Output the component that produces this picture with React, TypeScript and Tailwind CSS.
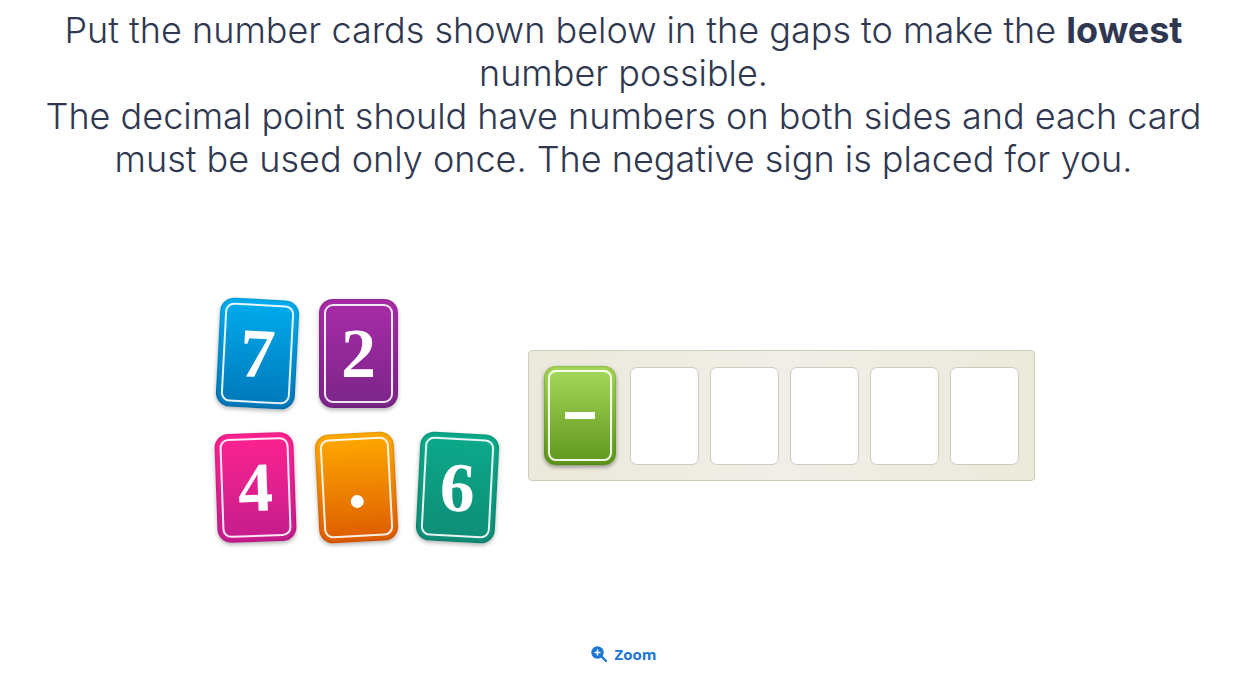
import { clsx } from "clsx";

type CardProps = {
  label: string;
  colours: string;
  tilt?: string;
};

function NumberCard({ label, colours, tilt }: CardProps) {
  const isPoint = label === ".";
  return (
    <button
      type="button"
      aria-label={isPoint ? "decimal point" : label}
      className={clsx(
        "flex h-[109px] w-[79px] rounded-[14px] bg-linear-to-b p-[5px] shadow-[0_2px_4px_rgba(0,0,0,0.3),inset_0_0_3px_rgba(0,0,0,0.25)]",
        colours,
        tilt,
      )}
    >
      <span className="flex h-full w-full items-center justify-center rounded-[9px] border-2 border-white/90 font-['Liberation_Serif',serif] text-[70px] leading-none font-bold text-white">
        {isPoint ? <span className="mt-7 size-[13px] rounded-full bg-white" /> : label}
      </span>
    </button>
  );
}

const slots = [1, 2, 3, 4, 5];

export default function App() {
  return (
    <main className="flex min-h-screen flex-col items-center bg-white font-[Inter,sans-serif]">
      <p className="px-6 pt-[9px] text-center text-[36px] leading-[43px] font-light text-[#2f3850]">
        Put the number cards shown below in the gaps to make the <strong className="font-bold">lowest</strong>
        <br />
        number possible.
        <br />
        The decimal point should have numbers on both sides and each card
        <br />
        must be used only once. The negative sign is placed for you.
      </p>

      <section className="mt-[118px] flex items-start justify-center gap-[31px] pl-1" aria-label="Number cards">
        <div className="flex flex-col gap-[25px]">
          <div className="flex gap-[22px] pl-0.5">
            <NumberCard label="7" colours="from-[#00adef] to-[#0077b8]" tilt="rotate-3" />
            <NumberCard label="2" colours="from-[#a92ba8] to-[#7b2589]" />
          </div>
          <div className="flex gap-[22px]">
            <NumberCard label="4" colours="from-[#ff2190] to-[#c41c8c]" tilt="-rotate-2" />
            <NumberCard label="." colours="from-[#ffaa00] to-[#dc5a00]" tilt="-rotate-3" />
            <NumberCard label="6" colours="from-[#0baa8b] to-[#0e8c76]" tilt="rotate-3" />
          </div>
        </div>

        <div className="mt-[51px] flex items-center gap-[14px] rounded-[4px] border border-[#cfcdb9] bg-linear-to-r from-[#ebe9da] via-[#f1eee8] to-[#ebeadb] p-[15px]">
          <div className="flex h-[99px] w-[72px] rounded-[12px] bg-linear-to-b from-[#a8da5a] to-[#5e9519] p-1 shadow-[0_2px_4px_rgba(0,0,0,0.4),inset_0_0_3px_rgba(60,110,0,0.6)]">
            <span
              role="img"
              aria-label="negative sign"
              className="flex h-full w-full items-center justify-center rounded-lg border-2 border-white/90"
            >
              <span className="h-[7px] w-[30px] bg-white" />
            </span>
          </div>
          <div className="grid grid-cols-5 gap-[11px]">
            {slots.map((slot) => (
              <button
                key={slot}
                type="button"
                aria-label={`Gap ${slot}`}
                className="h-[98px] w-[69px] rounded-[7px] border border-[#cfccb9] bg-white"
              />
            ))}
          </div>
        </div>
      </section>

      <button
        type="button"
        className="mt-auto mb-[27px] flex items-center gap-2 font-['Open_Sans',sans-serif] text-[15px] leading-5 font-bold text-[#1c76d2]"
      >
        <svg viewBox="0 0 16 16" className="size-4" aria-hidden="true">
          <path d="M10 10l5 5" stroke="currentColor" strokeWidth="2.4" strokeLinecap="round" />
          <circle cx="6.5" cy="6.5" r="6.2" fill="currentColor" />
          <path d="M6.5 3.5v6M3.5 6.5h6" stroke="white" strokeWidth="1.5" />
        </svg>
        Zoom
      </button>
    </main>
  );
}
